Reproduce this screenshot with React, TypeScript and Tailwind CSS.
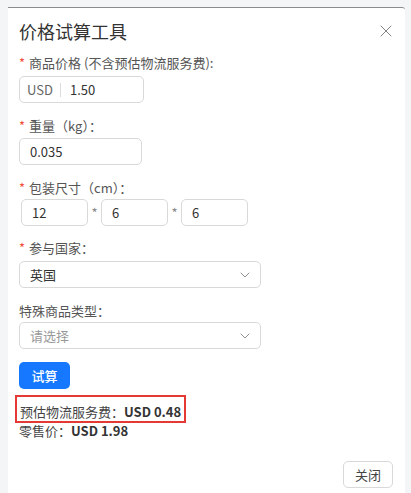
import { ChevronDown, X } from 'lucide-react';

function Label({ text, required }: { text: string; required?: boolean }) {
  return (
    <div className="h-[18px] leading-[18px] text-[13px] text-[#555]">
      {required && <span className="text-[#f0503c] mr-1">*</span>}
      {text}
    </div>
  );
}

function Select({ value, placeholder }: { value?: string; placeholder?: string }) {
  return (
    <div className="w-[242px] h-[27px] border border-[#d9d9d9] rounded-[5px] bg-white flex items-center justify-between pl-[10px] pr-[7px] text-[13px]">
      <span className={value ? 'text-[#333]' : 'text-[#999]'}>{value || placeholder}</span>
      <ChevronDown size={16} strokeWidth={1.4} className="text-[#888]" />
    </div>
  );
}

export default function App() {
  return (
    <div
      className="w-[411px] h-[493px] bg-[#f4f5f7] pt-[7px] pl-[8px] pr-[6px] overflow-hidden"
      style={{ fontFamily: '"Noto Sans CJK SC", "Noto Sans", sans-serif' }}
    >
      <div className="h-full bg-white border-t border-[#8c8c8c] rounded-tr-[3px] relative pl-[11px] pr-[12px]">
        <div className="flex items-center justify-between pt-[10px] h-[35px]">
          <div className="text-[18px] leading-6 text-[#333]">价格试算工具</div>
          <X size={20} strokeWidth={1.1} className="text-[#777] -mr-[3px]" />
        </div>

        <div className="mt-[11px]">
          <Label required text="商品价格 (不含预估物流服务费):" />
        </div>
        <div className="mt-[4px] w-[125px] h-[27px] border border-[#d9d9d9] rounded-[5px] flex items-center text-[13px]">
          <span className="pl-[7px] text-[#666]">USD</span>
          <span className="mx-[7px] w-px h-[14px] bg-[#ddd]" />
          <span className="pl-[2px] text-[#333]">1.50</span>
        </div>

        <div className="mt-[14px]">
          <Label required text="重量（kg）：" />
        </div>
        <div className="mt-[3px] w-[123px] h-[27px] border border-[#d9d9d9] rounded-[5px] flex items-center px-[10px] text-[13px] text-[#333]">
          0.035
        </div>

        <div className="mt-[14px]">
          <Label required text="包装尺寸（cm）：" />
        </div>
        <div className="mt-[2px] flex items-center pl-[2px]">
          <div className="w-[67px] h-[27px] border border-[#d9d9d9] rounded-[5px] flex items-center px-[10px] text-[13px] text-[#333]">12</div>
          <span className="w-[13px] text-center text-[13px] text-[#888]">*</span>
          <div className="w-[67px] h-[27px] border border-[#d9d9d9] rounded-[5px] flex items-center px-[10px] text-[13px] text-[#333]">6</div>
          <span className="w-[13px] text-center text-[13px] text-[#888]">*</span>
          <div className="w-[67px] h-[27px] border border-[#d9d9d9] rounded-[5px] flex items-center px-[10px] text-[13px] text-[#333]">6</div>
        </div>

        <div className="mt-[13px]">
          <Label required text="参与国家：" />
        </div>
        <div className="mt-[4px]">
          <Select value="英国" />
        </div>

        <div className="mt-[14px]">
          <Label text="特殊商品类型：" />
        </div>
        <div className="mt-[2px]">
          <Select placeholder="请选择" />
        </div>

        <button
          type="button"
          className="mt-[13px] w-[51px] h-[27px] rounded-[5px] bg-[#1677ff] text-white text-[13px] font-medium flex items-center justify-center"
        >
          试算
        </button>

        <div className="mt-[6px] -ml-[4px] w-[171px] h-[28px] border-2 border-[#e53935] flex items-end pl-[3px] text-[13px] text-[#444] leading-[18px]">
          <span>预估物流服务费：</span>
          <span className="font-bold text-[#333]">USD 0.48</span>
        </div>
        <div className="text-[13px] text-[#444] leading-[18px] -mt-[1px]">
          零售价：<span className="font-bold text-[#333]">USD 1.98</span>
        </div>

        <div className="absolute right-[12px] bottom-[5px] w-[50px] h-[27px] border border-[#d9d9d9] rounded-[5px] flex items-center justify-center text-[13px] text-[#444]">
          关闭
        </div>
      </div>
    </div>
  );
}
